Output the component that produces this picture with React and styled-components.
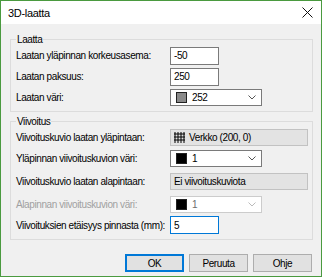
import React from 'react';
import styled, { createGlobalStyle } from 'styled-components';

const Global = createGlobalStyle`
    html, body { margin: 0; padding: 0; background: #ffffff; }
    body { font-family: "Liberation Sans", Arial, sans-serif; }
`;

const accent = '#0078d7';

const Window = styled.div`
    width: 322px;
    height: 277px;
    box-sizing: border-box;
    border: 1px solid #4a9a3f;
    background: #f0f0f0;
    display: flex;
    flex-direction: column;
    font-size: 10px;
    letter-spacing: -0.4px;
    color: #000;
`;

const TitleBar = styled.div`
    height: 23px;
    background: #fff;
    display: flex;
    align-items: center;
    justify-content: space-between;
    padding: 0 8px 0 7px;
    font-size: 11px;
    letter-spacing: -0.3px;
`;

const Body = styled.div`
    flex: 1;
    display: flex;
    flex-direction: column;
    padding: 10px 8px 0 9px;
    gap: 4px;
`;

const Group = styled.fieldset`
    margin: 0;
    border: 1px solid #dcdcdc;
    padding: 0 0 4px 5px;
    display: flex;
    flex-direction: column;
    height: ${({ h }) => h}px;
    box-sizing: border-box;
`;

const Legend = styled.legend`
    padding: 0 1px;
    margin-left: 0;
    color: #000;
`;

const Row = styled.div`
    display: flex;
    align-items: center;
    height: ${({ h }) => h || 21}px;
`;

const Label = styled.span`
    width: 154px;
    white-space: nowrap;
    color: ${({ disabled }) => (disabled ? '#a0a0a0' : '#000')};
`;

const Input = styled.div`
    width: 44px;
    height: 16px;
    border: 1px solid ${({ focused }) => (focused ? accent : '#7a7a7a')};
    background: #fff;
    display: flex;
    align-items: center;
    padding-left: 3px;
`;

const Select = styled.div`
    width: 80px;
    height: 15px;
    border: 1px solid ${({ disabled }) => (disabled ? '#cccccc' : '#7a7a7a')};
    background: #fff;
    display: flex;
    align-items: center;
    padding: 0 5px;
    gap: 5px;
    color: ${({ disabled }) => (disabled ? '#6d6d6d' : '#000')};
`;

const Swatch = styled.span`
    width: 9px;
    height: 9px;
    border: 1px solid #222;
    background: ${({ c }) => c};
    flex: none;
`;

const Chevron = styled.span`
    margin-left: auto;
    display: flex;
`;

const Field = styled.div`
    width: 133px;
    height: 15px;
    border: 1px solid #c2c2c2;
    background: #e3e3e3;
    display: flex;
    align-items: center;
    padding-left: 3px;
    gap: 4px;
`;

const Buttons = styled.div`
    display: flex;
    justify-content: flex-end;
    gap: 5px;
    margin-top: 10px;
    padding-right: 1px;
`;

const Button = styled.div`
    width: 57px;
    height: 16px;
    border: 1px solid ${({ primary }) => (primary ? accent : '#adadad')};
    box-shadow: ${({ primary }) => (primary ? `inset 0 0 0 1px ${accent}` : 'none')};
    background: #e1e1e1;
    display: flex;
    align-items: center;
    justify-content: center;
`;

const Close = () => (
    <svg width="11" height="11" viewBox="0 0 11 11">
        <path d="M0.5 0.5 L10.5 10.5 M10.5 0.5 L0.5 10.5" stroke="#111" strokeWidth="1" />
    </svg>
);

const Down = ({ color = '#555' }) => (
    <svg width="8" height="5" viewBox="0 0 8 5">
        <path d="M0.5 0.5 L4 4 L7.5 0.5" stroke={color} fill="none" strokeWidth="1" />
    </svg>
);

const Hatch = () => (
    <svg width="11" height="11" viewBox="0 0 11 11">
        <path d="M1 0V11M4 0V11M7 0V11M10 0V11M0 2H11M0 5H11M0 8H11" stroke="#000" strokeWidth="1" />
    </svg>
);

const App = () => (
    <>
        <Global />
        <Window>
            <TitleBar>
                <span>3D-laatta</span>
                <Close />
            </TitleBar>
            <Body>
                <Group h={78}>
                    <Legend>Laatta</Legend>
                    <Row>
                        <Label>Laatan yläpinnan korkeusasema:</Label>
                        <Input>-50</Input>
                    </Row>
                    <Row>
                        <Label>Laatan paksuus:</Label>
                        <Input>250</Input>
                    </Row>
                    <Row>
                        <Label>Laatan väri:</Label>
                        <Select>
                            <Swatch c="#8a8a8a" />
                            252
                            <Chevron><Down /></Chevron>
                        </Select>
                    </Row>
                </Group>
                <Group h={124}>
                    <Legend>Viivoitus</Legend>
                    <Row h={20}>
                        <Label>Viivoituskuvio laatan yläpintaan:</Label>
                        <Field><Hatch />Verkko (200, 0)</Field>
                    </Row>
                    <Row h={23}>
                        <Label>Yläpinnan viivoituskuvion väri:</Label>
                        <Select>
                            <Swatch c="#000" />
                            1
                            <Chevron><Down /></Chevron>
                        </Select>
                    </Row>
                    <Row h={23}>
                        <Label>Viivoituskuvio laatan alapintaan:</Label>
                        <Field>Ei viivoituskuviota</Field>
                    </Row>
                    <Row h={22}>
                        <Label disabled>Alapinnan viivoituskuvion väri:</Label>
                        <Select disabled>
                            <Swatch c="#000" />
                            1
                            <Chevron><Down color="#bbb" /></Chevron>
                        </Select>
                    </Row>
                    <Row h={20}>
                        <Label>Viivoituksien etäisyys pinnasta (mm):</Label>
                        <Input focused>5</Input>
                    </Row>
                </Group>
                <Buttons>
                    <Button primary>OK</Button>
                    <Button>Peruuta</Button>
                    <Button>Ohje</Button>
                </Buttons>
            </Body>
        </Window>
    </>
);

export default App;
